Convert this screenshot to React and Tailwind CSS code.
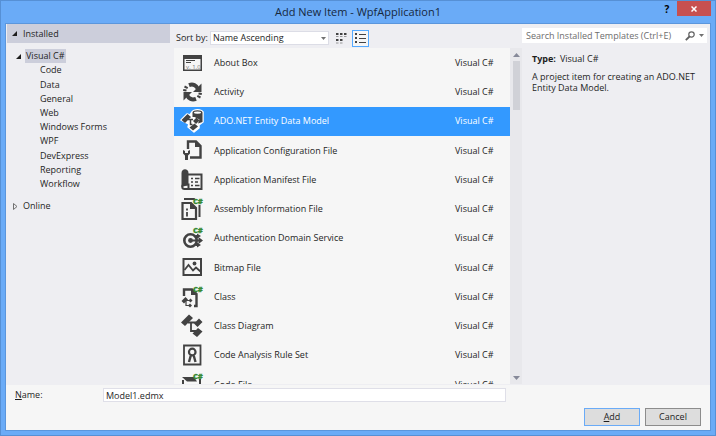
import React, { useState } from "react";

const INK = "#424242";

function CSharp() {
  return (
    <text x="13" y="7" fontSize="7.5" fontWeight="800" fill="#388a34" stroke="#388a34" strokeWidth=".3" fontFamily="Open Sans, sans-serif">
      C#
    </text>
  );
}

function Svg({ children }) {
  return (
    <svg className="size-6 shrink-0 overflow-visible" viewBox="0 0 24 24" fill="none" stroke={INK} strokeWidth="2" aria-hidden="true">
      {children}
    </svg>
  );
}

const icons = {
  about: (
    <Svg>
      <path d="M3 4h19v16H3z" fill={INK} stroke="none" />
      <path d="M4.500 8h16v10.500h-16z" fill="#f6f6f6" stroke="none" />
      <path d="M6 9.500h9M6 11.500h5" strokeWidth="1.200" />
      <text x="6" y="18" fontSize="6" fill="#777" stroke="none" fontFamily="Open Sans, sans-serif">v. 1.0</text>
    </Svg>
  ),
  activity: (
    <Svg>
      <path d="M9 5.200c4-1.500 7.500 0 9 4" strokeWidth="4" />
      <path d="M21.500 3.500V12H13z" fill={INK} stroke="none" />
      <path d="M16 18.800c-4 1.500-7.500 0-9-4" strokeWidth="4" />
      <path d="M3.500 20.500V12H12z" fill={INK} stroke="none" />
      <path d="m3.200 10 3.300.6M4.500 6.500l3.200 1.700M21.800 14l-3.300-.6M20.500 17.500l-3.200-1.700" strokeWidth="2" />
    </Svg>
  ),
  ado: (
    <Svg>
      <path d="m1 11 6-6 3 1 2-3c2-3 9-3 11 0v10l-4 3v3l-5 4-6-5 1-3z" fill="#fff" stroke="#fff" strokeWidth="1.500" strokeLinejoin="round" />
      <path d="m1.500 11 6-6L11 8l-6 6z" fill={INK} stroke="none" />
      <path d="M12.500 3.500c0-3 10-3 10 0v9.500l-4.500 1.500 1.500-4-5-2.500h-2z" fill={INK} stroke="none" />
      <ellipse cx="17.500" cy="3.600" rx="3.600" ry="1.200" fill="#fff" stroke="none" />
      <path d="m9.500 18.500 5-4 3.500 3-5 4z" fill={INK} stroke="none" />
      <path d="m13 12 3.500-3.500 3 3-3.500 3.500z" fill={INK} stroke="none" />
      <path d="M8 10.500h5M10.500 11v4.500h2" strokeWidth="1.500" />
    </Svg>
  ),
  config: (
    <Svg>
      <path d="M8 11V3.500h8l4.500 4.500v11.500H10" strokeWidth="2.400" />
      <path d="M15 3v6h6z" fill={INK} stroke="none" />
      <path d="M3 12v3.500l2 2V22h3v-4.500l2-2V12l-2 1v2H5v-2z" fill={INK} stroke="none" />
    </Svg>
  ),
  manifest: (
    <Svg>
      <path d="M1.500 5c0-5 7-5 7 0v12l-7 2z" fill={INK} stroke="none" />
      <path d="M8 6.500h13.500v14.500H4.500c-3 0-3-4.500 0-4.500H8.500V21" strokeWidth="2" />
      <path d="M11 10.500h2M15 10.500h4.500M11 14h2M15 14h3M11 17.500h2M15 17.500h4.500" strokeWidth="1.400" />
    </Svg>
  ),
  assembly: (
    <Svg>
      <path d="M2.500 6h8.500l5 5v11H2.500z" strokeWidth="2.200" />
      <path d="M10 5v7h7z" fill={INK} stroke="none" />
      <path d="M4 2h10l1 1M19.500 8v12" strokeWidth="2" />
      <path d="M7 11.500v2M7 15v4.500" strokeWidth="1.800" />
      <g stroke="none"><CSharp /></g>
    </Svg>
  ),
  auth: (
    <Svg>
      <circle cx="10.500" cy="14.500" r="6.200" strokeWidth="2.600" />
      <circle cx="10.500" cy="14.500" r="2.400" fill={INK} stroke="none" />
      <path d="M10.500 14.500H20M15.500 10h3M15.500 19h3" strokeWidth="1.800" />
      <path d="m18.500 11 4.500 3.500-4.500 3.500zM17 7.500l4 2.500-4 2.500zM17 16.500l4 2.500-4 2.500z" fill={INK} stroke="none" />
      <g stroke="none"><CSharp /></g>
    </Svg>
  ),
  bitmap: (
    <Svg>
      <path d="M3.500 4h17.500v16H3.500z" />
      <path d="m4.500 15 4-5 4.500 5.500 3-3 4.500 4" strokeWidth="1.800" />
      <circle cx="14.500" cy="8.500" r="1.900" fill={INK} stroke="none" />
    </Svg>
  ),
  class: (
    <Svg>
      <path d="M4 11V4.500h8l4.500 4.500v12H14" strokeWidth="2.400" />
      <path d="M11 4v6h6z" fill={INK} stroke="none" />
      <path d="m1.500 16 4-4 2.500 2.500-4 4zM8.500 15.500l2-2 2 2-2 2zM8 20.500l2-2 2 2-2 2z" fill={INK} stroke="none" />
      <path d="M5 15.500h4M6 16v4.500h3" strokeWidth="1.200" />
      <g stroke="none"><CSharp /></g>
    </Svg>
  ),
  diagram: (
    <Svg>
      <path d="m1 8.500 8-8 4 3.500-8 8zM14 9.500l5-5 3.500 3.500-5 5zM12.500 19.500l5.500-5.500 4.500 3.500-5.500 5.500z" fill={INK} stroke="none" />
      <path d="M8 8.500h8M11 9v8h5" strokeWidth="1.800" />
    </Svg>
  ),
  ruleset: (
    <Svg>
      <path d="M4 2.500h16.500v19H4z" strokeWidth="1.800" />
      <circle cx="12.250" cy="9" r="3.300" strokeWidth="2.200" />
      <path d="m10.800 12.500-1.800 6.500M13.700 12.500l1.800 6.500" strokeWidth="2.400" />
    </Svg>
  ),
  code: (
    <Svg>
      <path d="M20 7v14H3V8" strokeWidth="2" />
      <path d="M2 5h12l3 4.500H7z" fill={INK} stroke="none" />
      <g stroke="none"><CSharp /></g>
    </Svg>
  ),
};

const templates = [
  ["about", "About Box"],
  ["activity", "Activity"],
  ["ado", "ADO.NET Entity Data Model"],
  ["config", "Application Configuration File"],
  ["manifest", "Application Manifest File"],
  ["assembly", "Assembly Information File"],
  ["auth", "Authentication Domain Service"],
  ["bitmap", "Bitmap File"],
  ["class", "Class"],
  ["diagram", "Class Diagram"],
  ["ruleset", "Code Analysis Rule Set"],
  ["code", "Code File"],
];

const categories = ["Code", "Data", "General", "Web", "Windows Forms", "WPF", "DevExpress", "Reporting", "Workflow"];

function Expanded() {
  return (
    <svg className="size-[5px] shrink-0" viewBox="0 0 5 5" aria-hidden="true">
      <path d="M5 0v5H0z" fill="#1e1e1e" />
    </svg>
  );
}

function TitleBar() {
  return (
    <header className="grid h-[22px] shrink-0 grid-cols-[1fr_auto_1fr] items-start">
      <h1 className="col-start-2 pt-[3px] text-[11px] leading-4 text-[#16283d]">Add New Item - WpfApplication1</h1>
      <div className="flex justify-end">
        <button type="button" aria-label="Help" className="h-4 w-5 text-[10px] leading-4 font-bold text-black">?</button>
        <button type="button" aria-label="Close" className="flex h-[15px] w-[34px] items-center justify-center bg-[#c75050]">
          <svg className="size-[6px]" viewBox="0 0 6 6" stroke="#fff" strokeWidth="1.500" aria-hidden="true">
            <path d="m.5.5 5 5m0-5-5 5" />
          </svg>
        </button>
      </div>
    </header>
  );
}

function Sidebar() {
  return (
    <nav className="w-[163px] shrink-0">
      <button type="button" className="flex h-[19px] w-full items-center gap-[6px] bg-[#cccedb] pl-[5px]">
        <Expanded />
        Installed
      </button>
      <div className="mt-[6px] flex h-[14px] items-center gap-1 pl-[9px]">
        <Expanded />
        <a href="#visual-csharp" className="bg-[#cccedb] px-px leading-[14px]">Visual C#</a>
      </div>
      <ul className="grid h-32 auto-rows-fr pl-[33px]">
        {categories.map((c) => (
          <li key={c} className="flex items-center">
            <a href={"#" + c}>{c}</a>
          </li>
        ))}
      </ul>
      <button type="button" className="mt-2 flex h-[14px] items-center gap-[5px] pl-[6px]">
        <svg className="h-[7px] w-[5px]" viewBox="0 0 5 7" fill="none" stroke="#717171" aria-hidden="true">
          <path d="M.5.5v6l3.500-3z" />
        </svg>
        Online
      </button>
    </nav>
  );
}

function Toolbar() {
  return (
    <div className="flex h-6 items-center pt-1 pl-[2px]">
      <label htmlFor="sort" className="w-[34px] whitespace-nowrap">Sort by:</label>
      <div className="relative">
        <select id="sort" className="block h-[14px] w-[119px] appearance-none border border-[#dcdde6] bg-white pl-[2px] leading-3">
          <option>Name Ascending</option>
          <option>Name Descending</option>
        </select>
        <svg className="pointer-events-none absolute top-[6px] right-[3px] h-[3px] w-[5px]" viewBox="0 0 5 3" aria-hidden="true">
          <path d="M0 0h5L2.500 3z" fill="#717171" />
        </svg>
      </div>
      <button type="button" aria-label="Small icons" className="ml-1 flex size-[17px] items-center justify-center">
        <svg className="size-[11px]" viewBox="0 0 11 11" fill={INK} aria-hidden="true">
          <path d="M0 0h2.500v2H0zM4 0h2.500v2H4zM8 0h2.500v2H8zM0 6h2.500v2H0zM4 6h2.500v2H4z" />
          <path d="M0 3h2.500v1H0zM4 3h2.500v1H4zM8 3h2.500v1H8zM0 9.500h2.500v1H0zM4 9.500h2.500v1H4z" opacity=".5" />
        </svg>
      </button>
      <button type="button" aria-label="Medium icons" className="ml-[2px] flex size-[17px] items-center justify-center border border-[#55aaff] bg-[#f6f6f6]">
        <svg className="size-[11px]" viewBox="0 0 11 11" fill={INK} aria-hidden="true">
          <path d="M0 0h2v2H0zM0 4h2v2H0zM0 8h2v2H0zM4 1h7v1H4zM4 5h7v1H4zM4 9h7v1H4z" />
        </svg>
      </button>
    </div>
  );
}

function TemplateList({ selected, onSelect }) {
  return (
    <div className="flex min-h-0 flex-1">
      <div className="min-w-0 flex-1 overflow-hidden bg-[#f6f6f6]">
        <ul className="grid h-[351px] auto-rows-fr">
          {templates.map(([icon, name], i) => (
            <li key={name} className="grid">
              <button
                type="button"
                onClick={() => onSelect(i)}
                className={
                  i === selected
                    ? "flex items-center bg-[#3399ff] pl-[6px] text-left text-white"
                    : "flex items-center pl-[6px] text-left"
                }
              >
                {icons[icon]}
                <span className="flex-1 pl-[10px]">{name}</span>
                <span className="w-[55px]">Visual C#</span>
              </button>
            </li>
          ))}
        </ul>
      </div>
      <div className="flex w-3 flex-col items-center bg-[#e8e8ec] pt-[5px] pb-1">
        <svg className="h-1 w-[7px] shrink-0" viewBox="0 0 7 4" aria-hidden="true">
          <path d="M0 4h7L3.500 0z" fill="#868999" />
        </svg>
        <div className="mt-1 h-[49px] w-[7px] bg-[#d0d1d7]" />
        <svg className="mt-auto h-1 w-[7px] shrink-0" viewBox="0 0 7 4" aria-hidden="true">
          <path d="M0 0h7L3.500 4z" fill="#868999" />
        </svg>
      </div>
    </div>
  );
}

function Details() {
  return (
    <aside className="w-[188px] shrink-0 pt-1 pr-[3px]">
      <div className="flex h-[15px] items-center bg-white pr-[3px] pl-1">
        <input
          type="search"
          aria-label="Search Installed Templates"
          placeholder="Search Installed Templates (Ctrl+E)"
          className="min-w-0 flex-1 bg-transparent leading-3 outline-none placeholder:text-[#6d6d6d]"
        />
        <button type="button" aria-label="Search" className="flex items-center gap-1">
          <svg className="size-[10px]" viewBox="0 0 10 10" fill="none" stroke="#616161" aria-hidden="true">
            <circle cx="6.500" cy="3.500" r="2.700" strokeWidth="1.200" />
            <path d="M4.500 5.500.8 9.200" strokeWidth="1.800" />
          </svg>
          <svg className="h-[3px] w-[5px]" viewBox="0 0 5 3" aria-hidden="true">
            <path d="M0 0h5L2.500 3z" fill="#717171" />
          </svg>
        </button>
      </div>
      <div className="pt-[10px] pl-[10px] leading-3">
        <p><strong className="mr-1">Type:</strong>Visual C#</p>
        <p className="mt-[6px] leading-[11px]">A project item for creating an ADO.NET Entity Data Model.</p>
      </div>
    </aside>
  );
}

function Footer() {
  return (
    <footer className="h-[45px] shrink-0 bg-[#f6f6f6] pt-[3px]">
      <div className="flex items-center pl-[9px]">
        <label htmlFor="name" className="w-[88px]"><u>N</u>ame:</label>
        <input id="name" defaultValue="Model1.edmx" className="h-[14px] min-w-0 flex-1 border border-[#dfdfe8] bg-white pl-[2px] leading-3 outline-none" />
        <div className="w-[204px] shrink-0" />
      </div>
      <div className="mt-[6px] flex justify-end gap-[5px] pr-[9px]">
        <button type="button" className="h-[18px] w-14 border border-[#6aabf7] bg-[#dddddd]"><u>A</u>dd</button>
        <button type="button" className="h-[18px] w-14 border border-[#8c8c8c] bg-[#dddddd]">Cancel</button>
      </div>
    </footer>
  );
}

export default function App() {
  const [selected, setSelected] = useState(2);
  return (
    <div className="flex h-screen flex-col border border-[#5690d5] bg-[#6aabf7] px-[4px] pb-[4px] font-['Open_Sans','Noto_Sans',sans-serif] text-[9px] text-[#1e1e1e]">
      <TitleBar />
      <main className="flex min-h-0 flex-1 flex-col border border-[#5b96dc] bg-[#eeeef2]">
        <div className="flex min-h-0 flex-1 pl-px">
          <Sidebar />
          <section className="ml-1 flex min-w-0 flex-1 flex-col pb-px">
            <Toolbar />
            <TemplateList selected={selected} onSelect={setSelected} />
          </section>
          <Details />
        </div>
        <Footer />
      </main>
    </div>
  );
}
